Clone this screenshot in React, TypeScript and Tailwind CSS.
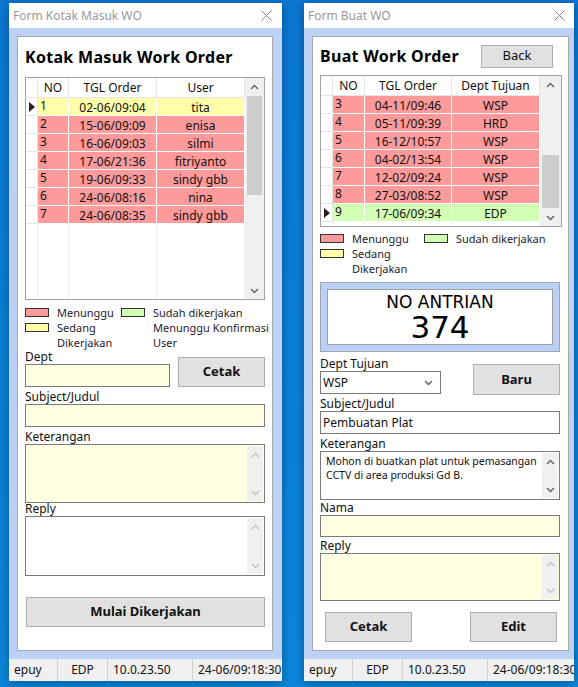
import type { ReactNode } from 'react';

// font stacks (Comic Sans / Segoe are not installed, fall back to Noto Sans)
const COMIC = "[font-family:'Comic_Sans_MS','Noto_Sans',sans-serif]";
const UI = "[font-family:'Segoe_UI','Noto_Sans',sans-serif]";
const TAHOMA = "[font-family:'Tahoma','DejaVu_Sans',sans-serif]";

type Col = { label: string; w: string; left?: boolean };
type Row = { cells: string[]; bg: string; current?: boolean };

const RED = 'bg-[#ff9a9a]';
const YELLOW = 'bg-[#ffffaa]';
const GREEN = 'bg-[#d2ffb4]';

const inboxCols: Col[] = [
  { label: 'NO', w: 'w-[31px]', left: true },
  { label: 'TGL Order', w: 'w-[88px]' },
  { label: 'User', w: 'w-[88px]' },
];

const inboxRows: Row[] = [
  { cells: ['1', '02-06/09:04', 'tita'], bg: YELLOW, current: true },
  { cells: ['2', '15-06/09:09', 'enisa'], bg: RED },
  { cells: ['3', '16-06/09:03', 'silmi'], bg: RED },
  { cells: ['4', '17-06/21:36', 'fitriyanto'], bg: RED },
  { cells: ['5', '19-06/09:33', 'sindy gbb'], bg: RED },
  { cells: ['6', '24-06/08:16', 'nina'], bg: RED },
  { cells: ['7', '24-06/08:35', 'sindy gbb'], bg: RED },
];

const orderCols: Col[] = [
  { label: 'NO', w: 'w-[32px]', left: true },
  { label: 'TGL Order', w: 'w-[87px]' },
  { label: 'Dept Tujuan', w: 'w-[88px]' },
];

const orderRows: Row[] = [
  { cells: ['3', '04-11/09:46', 'WSP'], bg: RED },
  { cells: ['4', '05-11/09:39', 'HRD'], bg: RED },
  { cells: ['5', '16-12/10:57', 'WSP'], bg: RED },
  { cells: ['6', '04-02/13:54', 'WSP'], bg: RED },
  { cells: ['7', '12-02/09:24', 'WSP'], bg: RED },
  { cells: ['8', '27-03/08:52', 'WSP'], bg: RED },
  { cells: ['9', '17-06/09:34', 'EDP'], bg: GREEN, current: true },
];

function Chevron({ up, dim }: { up?: boolean; dim?: boolean }) {
  return (
    <svg width="9" height="6" viewBox="0 0 9 6" className={dim ? 'text-[#c2c2c2]' : 'text-[#606060]'}>
      <polyline
        points={up ? '1,5 4.5,1.5 8,5' : '1,1 4.5,4.5 8,1'}
        fill="none"
        stroke="currentColor"
        strokeWidth="1.4"
      />
    </svg>
  );
}

function VScroll({ w, thumb, dim }: { w: string; thumb?: string; dim?: boolean }) {
  return (
    <div className={`flex flex-col shrink-0 bg-[#f0f0f0] ${w}`}>
      <div className="h-[17px] flex items-center justify-center">
        <Chevron up dim={dim} />
      </div>
      <div className="flex-1 flex flex-col">
        {thumb && <div className={`mx-[2px] bg-[#cdcdcd] ${thumb}`} />}
      </div>
      <div className="h-[17px] flex items-center justify-center">
        <Chevron dim={dim} />
      </div>
    </div>
  );
}

function Pointer() {
  return (
    <svg width="6" height="10" viewBox="0 0 6 10">
      <polygon points="0,0 6,5 0,10" fill="#222" />
    </svg>
  );
}

function DataGrid({
  cols,
  rows,
  size,
  scrollW,
  thumb,
}: {
  cols: Col[];
  rows: Row[];
  size: string;
  scrollW: string;
  thumb: string;
}) {
  return (
    <div className={`flex border border-[#a0a0a0] bg-white ${size} ${COMIC} text-[12px] text-[#111]`}>
      <div className="flex-1 flex flex-col">
        <div className="flex h-[20px] shrink-0">
          <div className="w-[12px] border-r border-b border-[#e6e6e6]" />
          {cols.map((c) => (
            <div
              key={c.label}
              className={`${c.w} border-r border-b border-[#e6e6e6] text-center leading-[19px]`}
            >
              {c.label}
            </div>
          ))}
        </div>
        {rows.map((r) => (
          <div key={r.cells[0]} className="flex h-[18px] shrink-0">
            <div className="w-[12px] border-r border-b border-[#e6e6e6] flex items-center justify-center">
              {r.current && <Pointer />}
            </div>
            {cols.map((c, i) => (
              <div
                key={c.label}
                className={`${c.w} ${r.bg} border-r border-b border-white ${
                  c.left ? 'pl-[2px] leading-[15px]' : 'text-center leading-[19px]'
                }`}
              >
                {r.cells[i]}
              </div>
            ))}
          </div>
        ))}
        <div className="flex-1 flex">
          <div className="w-[12px] border-r border-[#ececec]" />
          {cols.map((c) => (
            <div key={c.label} className={`${c.w} border-r border-[#ececec]`} />
          ))}
        </div>
      </div>
      <VScroll w={scrollW} thumb={thumb} />
    </div>
  );
}

function Swatch({ bg }: { bg: string }) {
  return <div className={`mt-[3px] h-[9px] w-[24px] shrink-0 border border-[#333] ${bg}`} />;
}

function LegendItem({ bg, children }: { bg?: string; children: ReactNode }) {
  return (
    <div className="flex gap-[8px]">
      {bg ? <Swatch bg={bg} /> : <div className="w-[24px] shrink-0" />}
      <div className="whitespace-nowrap">{children}</div>
    </div>
  );
}

function Label({ h, children }: { h: string; children: ReactNode }) {
  return <div className={`${h} flex items-end text-[12px] leading-[15px] text-[#111]`}>{children}</div>;
}

function Field({ h, bg, w = 'w-full', children }: { h: string; bg: string; w?: string; children?: ReactNode }) {
  return (
    <div className={`${h} ${w} ${bg} border border-[#7a7a7a] flex items-center pl-[2px] text-[12px] text-[#111]`}>
      {children}
    </div>
  );
}

function Memo({ h, bg, dim, children }: { h: string; bg: string; dim?: boolean; children?: ReactNode }) {
  return (
    <div className={`${h} ${bg} border border-[#7a7a7a] flex`}>
      <div className="flex-1 min-w-0 pl-[5px] pt-[2px] text-[10.5px] leading-[14px] text-[#111] whitespace-nowrap overflow-hidden">
        {children}
      </div>
      <VScroll w="w-[16px] my-[1px] mr-[1px]" dim={dim} />
    </div>
  );
}

function Button({ size, children }: { size: string; children: ReactNode }) {
  return (
    <div
      className={`${size} shrink-0 bg-[#e1e1e1] border border-[#adadad] flex items-center justify-center font-bold text-[13px] text-[#111]`}
    >
      {children}
    </div>
  );
}

function CloseX() {
  return (
    <svg width="11" height="11" viewBox="0 0 11 11" className="text-[#8a8a8a]">
      <path d="M0.5 0.5 L10.5 10.5 M10.5 0.5 L0.5 10.5" stroke="currentColor" strokeWidth="1" />
    </svg>
  );
}

function StatusBar({ time }: { time: string }) {
  return (
    <div className={`h-[22px] shrink-0 flex bg-[#f0f0f0] ${UI} text-[12px] text-[#111] leading-[22px] overflow-hidden whitespace-nowrap`}>
      <div className="w-[49px] shrink-0 pl-[5px] border-r border-[#d0d0d0]">epuy</div>
      <div className="w-[50px] shrink-0 text-center border-r border-[#d0d0d0]">EDP</div>
      <div className="w-[85px] shrink-0 pl-[5px] border-r border-[#d0d0d0]">10.0.23.50</div>
      <div className="pl-[5px]">{time}</div>
    </div>
  );
}

function Window({
  title,
  w,
  bodyPad,
  closePad,
  children,
}: {
  title: string;
  w: string;
  bodyPad: string;
  closePad: string;
  children: ReactNode;
}) {
  return (
    <div className={`${w} h-[678px] shrink-0 flex flex-col bg-white shadow-[0_2px_10px_rgba(0,0,0,0.35)]`}>
      <div className={`h-[25px] shrink-0 flex items-center justify-between pl-[4px] ${closePad} ${UI} text-[12px] text-[#999]`}>
        <span>{title}</span>
        <CloseX />
      </div>
      <div className={`flex-1 min-w-0 flex bg-[#bcd1f5] pt-[8px] pb-[8px] ${bodyPad}`}>
        <div className={`flex-1 min-w-0 overflow-hidden flex flex-col border border-[#a9a9a9] bg-white px-[7px] ${COMIC}`}>
          {children}
        </div>
      </div>
      <StatusBar time="24-06/09:18:30" />
    </div>
  );
}

function InboxForm() {
  return (
    <Window title="Form Kotak Masuk WO" w="w-[273px]" bodyPad="pl-[8px] pr-[9px]" closePad="pr-[10px]">
      <div className="h-[40px] shrink-0 flex items-center text-[16px] font-bold tracking-[0.3px] text-black">
        Kotak Masuk Work Order
      </div>
      <DataGrid cols={inboxCols} rows={inboxRows} size="h-[223px] w-[240px] shrink-0" scrollW="w-[19px]" thumb="mt-[1px] h-[99px]" />
      <div className="mt-[5px] w-[240px] flex text-[11px] leading-[15px] text-[#1c1c2e]">
        <div className="w-[96px] shrink-0 flex flex-col">
          <LegendItem bg={RED}>Menunggu</LegendItem>
          <LegendItem bg={YELLOW}>
            Sedang
            <br />
            Dikerjakan
          </LegendItem>
        </div>
        <div className="flex flex-col">
          <LegendItem bg={GREEN}>Sudah dikerjakan</LegendItem>
          <LegendItem>
            Menunggu Konfirmasi
            <br />
            User
          </LegendItem>
        </div>
      </div>
      <div className="w-[240px] flex items-end justify-between">
        <div className="w-[145px] flex flex-col">
          <Label h="h-[14px]">Dept</Label>
          <Field h="h-[23px]" bg="bg-[#ffffe1]" />
        </div>
        <Button size="w-[87px] h-[30px]">Cetak</Button>
      </div>
      <Label h="h-[17px]">Subject/Judul</Label>
      <Field h="h-[23px]" w="w-[240px]" bg="bg-[#ffffe1]" />
      <Label h="h-[17px]">Keterangan</Label>
      <div className="w-[240px]">
        <Memo h="h-[59px]" bg="bg-[#ffffe1]" dim />
      </div>
      <Label h="h-[13px]">Reply</Label>
      <div className="w-[240px]">
        <Memo h="h-[60px]" bg="bg-white" dim />
      </div>
      <div className="mt-[21px] pl-[1px]">
        <Button size="w-[239px] h-[30px]">Mulai Dikerjakan</Button>
      </div>
    </Window>
  );
}

function CreateForm() {
  return (
    <Window title="Form Buat WO" w="w-[270px]" bodyPad="pl-[8px] pr-[5px]" closePad="pr-[9px]">
      <div className="h-[38px] shrink-0 flex items-center justify-between">
        <span className="text-[16px] font-bold tracking-[0.3px] text-black">Buat Work Order</span>
        <div className="mr-[8px]">
          <div className="w-[72px] h-[23px] bg-[#e1e1e1] border border-[#adadad] flex items-center justify-center text-[13px] text-[#111]">
            Back
          </div>
        </div>
      </div>
      <DataGrid cols={orderCols} rows={orderRows} size="h-[152px] w-[242px] shrink-0" scrollW="w-[21px]" thumb="mt-[62px] h-[53px]" />
      <div className="mt-[4px] flex text-[11px] leading-[15px] text-[#1c1c2e]">
        <div className="w-[104px] shrink-0 flex flex-col">
          <LegendItem bg={RED}>Menunggu</LegendItem>
          <LegendItem bg={YELLOW}>
            Sedang
            <br />
            Dikerjakan
          </LegendItem>
        </div>
        <LegendItem bg={GREEN}>Sudah dikerjakan</LegendItem>
      </div>
      <div className="mt-[6px] w-[240px] h-[70px] shrink-0 border border-[#a0a8b8] bg-[#bcd1f5] p-[6px]">
        <div className={`h-full border border-[#a0a0a0] bg-white flex flex-col items-center pt-[3px] text-black ${TAHOMA}`}>
          <div className="text-[17px] leading-[19px]">NO ANTRIAN</div>
          <div className="text-[31px] leading-[31px]">374</div>
        </div>
      </div>
      <div className="flex items-end justify-between w-[240px]">
        <div className="flex flex-col">
          <Label h="h-[19px]">Dept Tujuan</Label>
          <div className="h-[23px] w-[121px] bg-white border border-[#7a7a7a] flex items-center justify-between pl-[2px] pr-[7px] text-[12px] text-[#111]">
            <span>WSP</span>
            <Chevron />
          </div>
        </div>
        <div className="-mb-px">
          <Button size="w-[87px] h-[31px]">Baru</Button>
        </div>
      </div>
      <Label h="h-[17px]">Subject/Judul</Label>
      <Field h="h-[23px]" w="w-[240px]" bg="bg-white">
        Pembuatan Plat
      </Field>
      <Label h="h-[17px]">Keterangan</Label>
      <div className="w-[240px]">
        <Memo h="h-[49px]" bg="bg-white">
          Mohon di buatkan plat untuk pemasangan
          <br />
          CCTV di area produksi Gd B.
        </Memo>
      </div>
      <Label h="h-[15px]">Nama</Label>
      <Field h="h-[22px]" w="w-[240px]" bg="bg-[#ffffe1]" />
      <Label h="h-[16px]">Reply</Label>
      <div className="w-[240px]">
        <Memo h="h-[48px]" bg="bg-[#ffffe1]" dim />
      </div>
      <div className="mt-[11px] flex justify-between pl-[5px] pr-[4px]">
        <Button size="w-[87px] h-[30px]">Cetak</Button>
        <Button size="w-[87px] h-[30px]">Edit</Button>
      </div>
    </Window>
  );
}

export default function App() {
  return (
    <div className="w-[578px] h-[687px] overflow-hidden flex gap-[22px] pl-[9px] pt-[3px] bg-gradient-to-b from-[#0a78d4] to-[#0c86dc]">
      <InboxForm />
      <CreateForm />
    </div>
  );
}
